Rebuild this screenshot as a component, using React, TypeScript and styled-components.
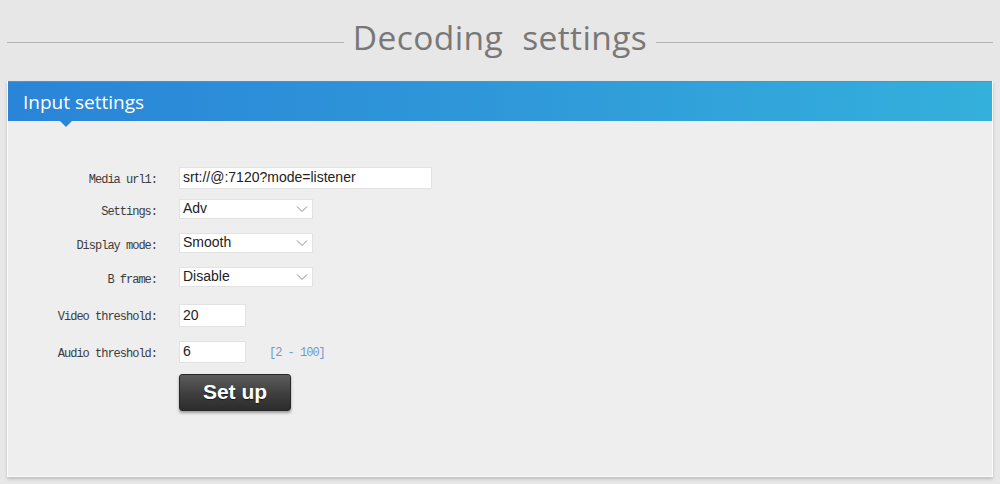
import React from "react";
import styled, { createGlobalStyle } from "styled-components";

const Global = createGlobalStyle`
  html, body { margin: 0; padding: 0; background: #e7e7e7; }
  body { width: 1000px; height: 484px; overflow: hidden; }
  * { box-sizing: border-box; }
`;

const Page = styled.div`
  display: flex;
  flex-direction: column;
  padding: 3px 7px 0 7px;
  height: 484px;
`;

const TitleRow = styled.div`
  display: flex;
  align-items: center;
  height: 78px;
  padding-bottom: 8px;
`;

const Rule = styled.div`
  flex: 1;
  height: 1px;
  margin-top: 8px;
  background: #b4b4b4;
`;

const Title = styled.h1`
  margin: 0;
  padding: 0 9px;
  font-family: "Open Sans", "Noto Sans", sans-serif;
  font-weight: 400;
  font-size: 33.5px;
  letter-spacing: 0.4px;
  word-spacing: 10px;
  color: #787878;
  line-height: 1;
`;

const Panel = styled.section`
  display: flex;
  flex-direction: column;
  height: 396px;
  background: #eeeeee;
  border: 1px solid #fafafa;
  border-top: 0;
  box-shadow: 0 2px 3px rgba(0, 0, 0, 0.18);
`;

const Header = styled.div`
  position: relative;
  height: 40px;
  display: flex;
  align-items: center;
  padding-left: 15px;
  background: linear-gradient(90deg, #2a84d8 0%, #2f98d9 50%, #34b0dc 100%);
  border-top: 1px solid #3a98df;
  font-family: "Open Sans", "Noto Sans", sans-serif;
  font-size: 19px;
  color: #ffffff;
`;

const Pointer = styled.span`
  position: absolute;
  left: 52px;
  bottom: -6px;
  width: 0;
  height: 0;
  border-left: 6px solid transparent;
  border-right: 6px solid transparent;
  border-top: 6px solid #2a84d8;
`;

const Form = styled.div`
  display: flex;
  flex-direction: column;
  padding-top: 46px;
`;

const Row = styled.div<{ $mt: number }>`
  display: flex;
  align-items: flex-start;
  margin-top: ${(p) => p.$mt}px;
`;

const Label = styled.label`
  width: 149px;
  height: 20px;
  text-align: right;
  padding-top: 7px;
  margin-right: 22px;
  line-height: 13px;
  font-family: "Liberation Mono", "DejaVu Sans Mono", monospace;
  font-size: 12px;
  letter-spacing: -1px;
  color: #3c3c3c;
`;

const TextInput = styled.input<{ $w: number; $h: number }>`
  width: ${(p) => p.$w}px;
  height: ${(p) => p.$h}px;
  border: 1px solid #e2e2e2;
  background: #ffffff;
  padding: 0 3px 2px 3px;
  font-family: "Liberation Sans", Arial, sans-serif;
  font-size: 14px;
  color: #222;
  outline: none;
`;

const SelectBox = styled.div`
  position: relative;
  width: 134px;
  height: 20px;
`;

const Select = styled.select`
  appearance: none;
  width: 100%;
  height: 100%;
  border: 1px solid #e2e2e2;
  border-radius: 0;
  background: #ffffff;
  padding: 0 3px 2px 3px;
  font-family: "Liberation Sans", Arial, sans-serif;
  font-size: 14px;
  color: #222;
  outline: none;
`;

const Chevron = styled.svg`
  position: absolute;
  right: 5px;
  top: 6px;
  pointer-events: none;
`;

const Range = styled.span`
  margin-left: 23px;
  padding-top: 5px;
  font-family: "Liberation Mono", "DejaVu Sans Mono", monospace;
  font-size: 12px;
  letter-spacing: -1px;
  color: #6d9ccf;
`;

const Button = styled.button`
  margin-left: 171px;
  width: 112px;
  height: 37px;
  border: 1px solid #262626;
  border-radius: 3px;
  background: linear-gradient(180deg, #5c5c5c 0%, #3e3e3e 55%, #2c2c2c 100%);
  box-shadow: 0 2px 3px rgba(0, 0, 0, 0.35);
  font-family: "Liberation Sans", Arial, sans-serif;
  font-weight: 700;
  font-size: 21px;
  color: #ffffff;
  text-shadow: 0 1px 1px rgba(0, 0, 0, 0.6);
  padding: 0 0 2px 0;
`;

const Down = () => (
  <Chevron width="12" height="8" viewBox="0 0 12 8">
    <path d="M1 1.5 L6 6.5 L11 1.5" fill="none" stroke="#8a8a8a" strokeWidth="1" />
  </Chevron>
);

const Dropdown = ({ value, options }: { value: string; options: string[] }) => (
  <SelectBox>
    <Select defaultValue={value}>
      {options.map((o) => (
        <option key={o}>{o}</option>
      ))}
    </Select>
    <Down />
  </SelectBox>
);

export default function App() {
  return (
    <>
      <Global />
      <Page>
        <TitleRow>
          <Rule />
          <Title>Decoding settings</Title>
          <Rule />
        </TitleRow>
        <Panel>
          <Header>
            Input settings
            <Pointer />
          </Header>
          <Form>
            <Row $mt={0}>
              <Label>Media url1:</Label>
              <TextInput $w={253} $h={22} defaultValue="srt://@:7120?mode=listener" />
            </Row>
            <Row $mt={10}>
              <Label>Settings:</Label>
              <Dropdown value="Adv" options={["Adv", "Basic"]} />
            </Row>
            <Row $mt={14}>
              <Label>Display mode:</Label>
              <Dropdown value="Smooth" options={["Smooth", "Realtime"]} />
            </Row>
            <Row $mt={14}>
              <Label>B frame:</Label>
              <Dropdown value="Disable" options={["Disable", "Enable"]} />
            </Row>
            <Row $mt={17}>
              <Label>Video threshold:</Label>
              <TextInput $w={67} $h={23} defaultValue="20" />
            </Row>
            <Row $mt={14}>
              <Label>Audio threshold:</Label>
              <TextInput $w={67} $h={22} defaultValue="6" />
              <Range>[2 - 100]</Range>
            </Row>
            <Row $mt={11}>
              <Button>Set up</Button>
            </Row>
          </Form>
        </Panel>
      </Page>
    </>
  );
}
